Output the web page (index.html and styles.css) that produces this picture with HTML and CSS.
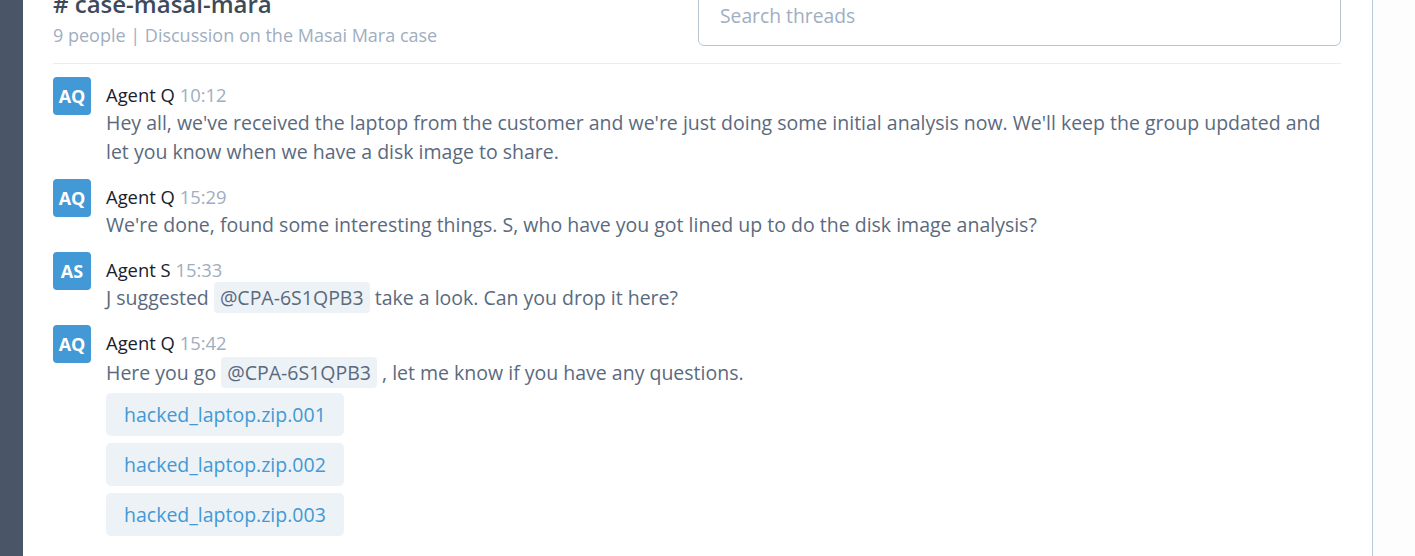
FILE: index.html
```html
<!DOCTYPE html>
<html>
<head>
<meta charset="utf-8">
<link rel="stylesheet" href="styles.css">
</head>
<body>
<div class="sidebar"></div>
<div class="main">
  <div class="header">
    <div class="header-left">
      <div class="title"># case-masai-mara</div>
      <div class="subtitle">9 people | Discussion on the Masai Mara case</div>
    </div>
    <div class="search">Search threads</div>
  </div>
  <div class="messages">
    <div class="message">
      <div class="avatar">AQ</div>
      <div class="content">
        <div class="meta"><span class="name">Agent Q</span> <span class="time">10:12</span></div>
        <div class="text">Hey all, we've received the laptop from the customer and we're just doing some initial analysis now. We'll keep the group updated and let you know when we have a disk image to share.</div>
      </div>
    </div>
    <div class="message">
      <div class="avatar">AQ</div>
      <div class="content">
        <div class="meta"><span class="name">Agent Q</span> <span class="time">15:29</span></div>
        <div class="text">We're done, found some interesting things. S, who have you got lined up to do the disk image analysis?</div>
      </div>
    </div>
    <div class="message">
      <div class="avatar">AS</div>
      <div class="content">
        <div class="meta"><span class="name">Agent S</span> <span class="time">15:33</span></div>
        <div class="text">J suggested <span class="mention">@CPA-6S1QPB3</span> take a look. Can you drop it here?</div>
      </div>
    </div>
    <div class="message">
      <div class="avatar">AQ</div>
      <div class="content">
        <div class="meta"><span class="name">Agent Q</span> <span class="time">15:42</span></div>
        <div class="text text-with-files">Here you go <span class="mention">@CPA-6S1QPB3</span> , let me know if you have any questions.</div>
        <div class="files">
          <div class="file">hacked_laptop.zip.001</div>
          <div class="file">hacked_laptop.zip.002</div>
          <div class="file">hacked_laptop.zip.003</div>
        </div>
      </div>
    </div>
  </div>
</div>
<div class="aside"></div>
</body>
</html>
```

FILE: styles.css
```css
html, body {
  margin: 0;
  padding: 0;
  height: 556px;
  overflow: hidden;
}
body {
  display: flex;
  font-family: "Open Sans", "Liberation Sans", sans-serif;
  background: #ffffff;
}
.sidebar {
  width: 23px;
  flex: none;
  background: #4a5668;
}
.main {
  width: 1288px;
  flex: none;
  padding: 0 31px 0 30px;
  border-right: 1px solid #b7c8d8;
  background: #ffffff;
}
.aside {
  flex: 1;
  background: #fdfdfd;
}
.header {
  display: flex;
  justify-content: space-between;
  align-items: flex-start;
  margin-top: -13px;
  padding-bottom: 16px;
  border-bottom: 1px solid #e9eef3;
}
.title {
  font-size: 24px;
  line-height: 34px;
  font-weight: 600;
  color: #3d4a5a;
}
.subtitle {
  margin-top: 2px;
  font-size: 18px;
  line-height: 24px;
  color: #a0aec0;
}
.search {
  margin-top: -2px;
  width: 643px;
  height: 61px;
  box-sizing: border-box;
  border: 1px solid #b9c6d2;
  border-radius: 6px;
  padding: 0 21px;
  display: flex;
  align-items: center;
  font-size: 19.3px;
  color: #a0aec0;
}
.messages {
  padding-top: 13px;
}
.message {
  display: flex;
  gap: 15px;
  margin-bottom: 13px;
}
.avatar {
  width: 38px;
  height: 38px;
  flex: none;
  border-radius: 4px;
  background: #4299d5;
  color: #ffffff;
  font-weight: 700;
  font-size: 18px;
  display: flex;
  align-items: center;
  justify-content: center;
}
.content {
  flex: 1;
}
.meta {
  margin-top: 5px;
  line-height: 26px;
  font-size: 18.4px;
}
.name {
  color: #1a202c;
}
.time {
  color: #a0aec0;
}
.text {
  font-size: 19.5px;
  line-height: 29px;
  color: #5a6a7e;
}
.text-with-files {
  padding-top: 2px;
}
.mention {
  background: #edf2f7;
  border-radius: 4px;
  padding: 2px 6px;
}
.files {
  display: flex;
  flex-direction: column;
  align-items: flex-start;
  gap: 7px;
  margin-top: 6px;
}
.file {
  height: 43px;
  line-height: 43px;
  padding: 0 18px;
  background: #edf2f7;
  border-radius: 5px;
  font-size: 19.5px;
  color: #4299d5;
}
```
